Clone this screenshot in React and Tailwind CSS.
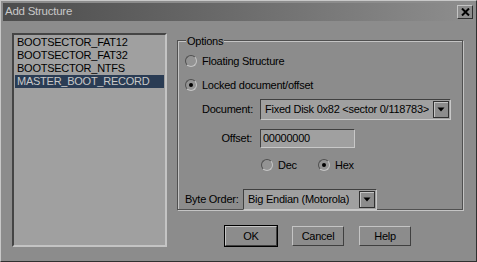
import React from 'react';

const items = ['BOOTSECTOR_FAT12', 'BOOTSECTOR_FAT32', 'BOOTSECTOR_NTFS', 'MASTER_BOOT_RECORD'];

function Radio({ checked, label, className = '' }) {
    return (
        <div className={'flex items-center gap-[5px] ' + className}>
            <div className="flex h-[12px] w-[12px] items-center justify-center rounded-full border border-t-[#505050] border-l-[#505050] border-b-[#c4c4c4] border-r-[#c4c4c4] bg-[#939393]">
                {checked && <div className="h-[4px] w-[4px] rounded-full bg-black" />}
            </div>
            <span>{label}</span>
        </div>
    );
}

function DropButton() {
    return (
        <div className="flex h-[17px] w-[16px] shrink-0 items-center justify-center border border-[#303030] bg-[#8c8c8c] shadow-[inset_1px_1px_0_#c4c4c4]">
            <svg width="8" height="5" viewBox="0 0 8 5">
                <polygon points="0.5,0.5 7.5,0.5 4,4.5" fill="#000" />
            </svg>
        </div>
    );
}

function Combo({ value, className }) {
    return (
        <div
            className={
                'flex items-center justify-between border border-t-[#404040] border-l-[#404040] border-b-[#c8c8c8] border-r-[#c8c8c8] bg-[#a0a0a0] pl-[4px] pr-[1px] ' +
                className
            }
        >
            <span className="whitespace-nowrap overflow-hidden">{value}</span>
            <DropButton />
        </div>
    );
}

function Button({ label, isDefault }) {
    return (
        <div className={isDefault ? 'border border-black' : 'border border-transparent'}>
            <div className="flex h-[20px] w-[52px] items-center justify-center border border-t-[#c4c4c4] border-l-[#c4c4c4] border-b-[#404040] border-r-[#404040] bg-[#8c8c8c]">
                {label}
            </div>
        </div>
    );
}

export default function App() {
    return (
        <div className="flex h-[262px] w-[477px] flex-col border border-t-[#c8c8c8] border-l-[#c8c8c8] border-b-[#303030] border-r-[#303030] bg-[#8c8c8c] p-[2px] font-['Liberation_Sans',Arial,sans-serif] text-[11px] tracking-[-0.25px] text-black">
            <div className="flex h-[18px] items-center justify-between bg-gradient-to-r from-[#4c4c4c] to-[#8e8e8e] pl-[2px] pr-[1px]">
                <span className="text-[11.5px] text-[#c8c8c8]">Add Structure</span>
                <div className="flex h-[14px] w-[16px] items-center justify-center border border-t-[#c4c4c4] border-l-[#c4c4c4] border-b-[#303030] border-r-[#303030] bg-[#8c8c8c]">
                    <svg width="9" height="8" viewBox="0 0 9 8">
                        <path d="M1 0.5 L8 7.5 M8 0.5 L1 7.5" stroke="#000" strokeWidth="2" />
                    </svg>
                </div>
            </div>
            <div className="flex pl-[9px] pt-[12px]">
                <div className="h-[214px] w-[155px] border-2 border-t-[#454545] border-l-[#454545] border-b-[#c4c4c4] border-r-[#c4c4c4] bg-[#a0a0a0] pt-[1px] pl-[1px] pr-[1px]">
                    {items.map((item, i) => (
                        <div
                            key={item}
                            className={
                                i === 3
                                    ? 'flex h-[13px] items-center bg-[#2a3c54] pl-[2px] text-[#c8c8c8]'
                                    : 'flex h-[13px] items-center pl-[2px]'
                            }
                        >
                            {item}
                        </div>
                    ))}
                </div>
                <div className="ml-[10px] flex flex-col pt-[7px]">
                    <div className="relative h-[170px] w-[286px] border border-[#505050] shadow-[inset_1px_1px_0_#c4c4c4,1px_1px_0_#c4c4c4]">
                        <span className="absolute left-[8px] top-[-8px] bg-[#8c8c8c] px-[1px]">Options</span>
                        <div className="flex flex-col pl-[7px] pt-[12px]">
                            <Radio label="Floating Structure" />
                            <div className="mt-[7px]">
                                <Radio checked label="Locked document/offset" />
                            </div>
                            <div className="mt-[6px] flex items-center">
                                <span className="w-[75px] pl-[17px]">Document:</span>
                                <Combo className="h-[21px] w-[191px]" value="Fixed Disk 0x82 <sector 0/118783>" />
                            </div>
                            <div className="mt-[9px] flex items-center">
                                <span className="w-[75px] pr-[8px] text-right">Offset:</span>
                                <div className="flex h-[19px] w-[95px] items-center border border-t-[#404040] border-l-[#404040] border-b-[#c8c8c8] border-r-[#c8c8c8] bg-[#a0a0a0] pl-[2px]">
                                    00000000
                                </div>
                            </div>
                            <div className="mt-[9px] flex items-center pl-[76px]">
                                <Radio className="w-[57px]" label="Dec" />
                                <Radio checked label="Hex" />
                            </div>
                            <div className="mt-[15px] flex items-center">
                                <span className="w-[58px]">Byte Order:</span>
                                <Combo className="h-[21px] w-[134px]" value="Big Endian (Motorola)" />
                            </div>
                        </div>
                    </div>
                    <div className="mt-[15px] flex gap-[13px] pl-[47px]">
                        <Button isDefault label="OK" />
                        <Button label="Cancel" />
                        <Button label="Help" />
                    </div>
                </div>
            </div>
        </div>
    );
}
